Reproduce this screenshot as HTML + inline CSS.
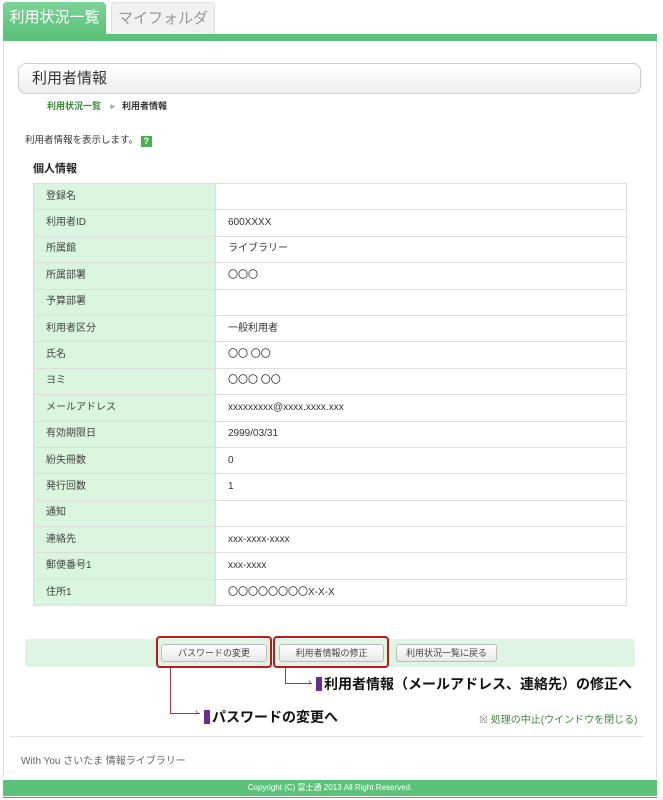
<!DOCTYPE html>
<html><head><meta charset="utf-8"><style>
*{margin:0;padding:0;box-sizing:border-box}
body{width:663px;height:800px;background:#fff;font-family:"Liberation Sans","Noto Sans CJK JP",sans-serif;position:relative;overflow:hidden;color:#333}
.abs{position:absolute}
.tab{position:absolute;top:2px;height:33px;border-radius:4px 4px 0 0;font-size:15px;line-height:31px;text-align:center}
table{position:absolute;left:33px;top:183px;width:594px;border-collapse:collapse;font-size:10px}
td{height:26.4px;border:1px solid #ddd;padding-left:12px;color:#333;vertical-align:middle;line-height:12px}
td.l{width:182px;background:#d9f5dd;color:#444}
.btn{position:absolute;top:644px;height:18px;border:1px solid #bbb;border-radius:3px;background:linear-gradient(#fff,#e8e8e8);font-size:9px;text-align:center;line-height:16px;color:#444}
.red{position:absolute;border:2px solid #c0171b;border-radius:4px}
.ln{position:absolute;background:#a33}
.ann{position:absolute;font-size:14px;font-weight:bold;color:#111}
.ann:before{content:"";display:inline-block;width:6px;height:14px;background:#6a2d91;vertical-align:-2px;margin-right:2px}
</style></head><body>
<div class="tab" style="left:3px;width:103px;background:linear-gradient(#7dd498,#5cc27a);color:#fff">利用状況一覧</div>
<div class="tab" style="left:111px;width:104px;background:#f1f1f1;border:1px solid #ddd;border-bottom:none;color:#999">マイフォルダ</div>
<div class="abs" style="left:3px;top:34px;width:654px;height:7px;background:#5cc27a"></div>
<div class="abs" style="left:3px;top:41px;width:654px;height:737px;border-left:1px solid #ddd;border-right:1px solid #ddd"></div>
<div class="abs" style="left:18px;top:63px;width:623px;height:31px;border:1px solid #ccc;border-radius:8px;background:linear-gradient(#fff,#eee);font-size:15px;line-height:29px;padding-left:13px;color:#333">利用者情報</div>
<div class="abs" style="left:47px;top:99px;font-size:9px;font-weight:bold;color:#3a8a3a">利用状況一覧 <span style="color:#aaa;margin:0 7px">▸</span><span style="color:#333">利用者情報</span></div>
<div class="abs" style="left:25px;top:132px;font-size:9.5px;color:#333">利用者情報を表示します。 <span style="display:inline-block;width:11px;height:11px;background:#4caf50;color:#fff;font-size:9px;line-height:11px;text-align:center;font-weight:bold;vertical-align:-1px">?</span></div>
<div class="abs" style="left:33px;top:160px;font-size:11px;font-weight:bold;color:#222">個人情報</div>
<table>
<tr><td class="l">登録名</td><td></td></tr>
<tr><td class="l">利用者ID</td><td>600XXXX</td></tr>
<tr><td class="l">所属館</td><td>ライブラリー</td></tr>
<tr><td class="l">所属部署</td><td>〇〇〇</td></tr>
<tr><td class="l">予算部署</td><td></td></tr>
<tr><td class="l">利用者区分</td><td>一般利用者</td></tr>
<tr><td class="l">氏名</td><td>〇〇 〇〇</td></tr>
<tr><td class="l">ヨミ</td><td>〇〇〇 〇〇</td></tr>
<tr><td class="l">メールアドレス</td><td>xxxxxxxxx@xxxx.xxxx.xxx</td></tr>
<tr><td class="l">有効期限日</td><td>2999/03/31</td></tr>
<tr><td class="l">紛失冊数</td><td>0</td></tr>
<tr><td class="l">発行回数</td><td>1</td></tr>
<tr><td class="l">通知</td><td></td></tr>
<tr><td class="l">連絡先</td><td>xxx-xxxx-xxxx</td></tr>
<tr><td class="l">郵便番号1</td><td>xxx-xxxx</td></tr>
<tr><td class="l">住所1</td><td>〇〇〇〇〇〇〇〇X-X-X</td></tr>
</table>
<div class="abs" style="left:25px;top:639px;width:610px;height:28px;background:#dff5e3;border-radius:3px"></div>
<div class="btn" style="left:161px;width:106px">パスワードの変更</div>
<div class="btn" style="left:279px;width:105px">利用者情報の修正</div>
<div class="btn" style="left:396px;width:101px">利用状況一覧に戻る</div>
<div class="red" style="left:156px;top:636px;width:116px;height:32px"></div>
<div class="red" style="left:273px;top:636px;width:116px;height:32px"></div>
<div class="ln" style="left:170px;top:668px;width:1px;height:45px"></div>
<div class="ln" style="left:170px;top:713px;width:30px;height:1px"></div>
<div class="abs" style="left:195px;top:707px;font-size:10px;color:#a33">›</div>
<div class="ln" style="left:285px;top:668px;width:1px;height:15px"></div>
<div class="ln" style="left:285px;top:683px;width:27px;height:1px"></div>
<div class="abs" style="left:308px;top:677px;font-size:10px;color:#a33">›</div>
<div class="ann" style="left:316px;top:674px">利用者情報（メールアドレス、連絡先）の修正へ</div>
<div class="ann" style="left:204px;top:707px">パスワードの変更へ</div>
<div class="abs" style="left:479px;top:711px;font-size:10px;color:#3a8a3a"><span style="color:#888">☒</span> 処理の中止(ウインドウを閉じる)</div>
<div class="abs" style="left:10px;top:736px;width:633px;height:1px;background:#e5e5e5"></div>
<div class="abs" style="left:21px;top:752px;font-size:10px;color:#666">With You さいたま 情報ライブラリー</div>
<div class="abs" style="left:3px;top:780px;width:654px;height:16px;background:#5cc27a;color:#fff;font-size:8px;text-align:center;line-height:16px">Copyright (C) 富士通 2013 All Right Reserved.</div>
<div class="abs" style="left:3px;top:797px;width:654px;height:1px;background:#6a8fa0"></div>
</body></html>
